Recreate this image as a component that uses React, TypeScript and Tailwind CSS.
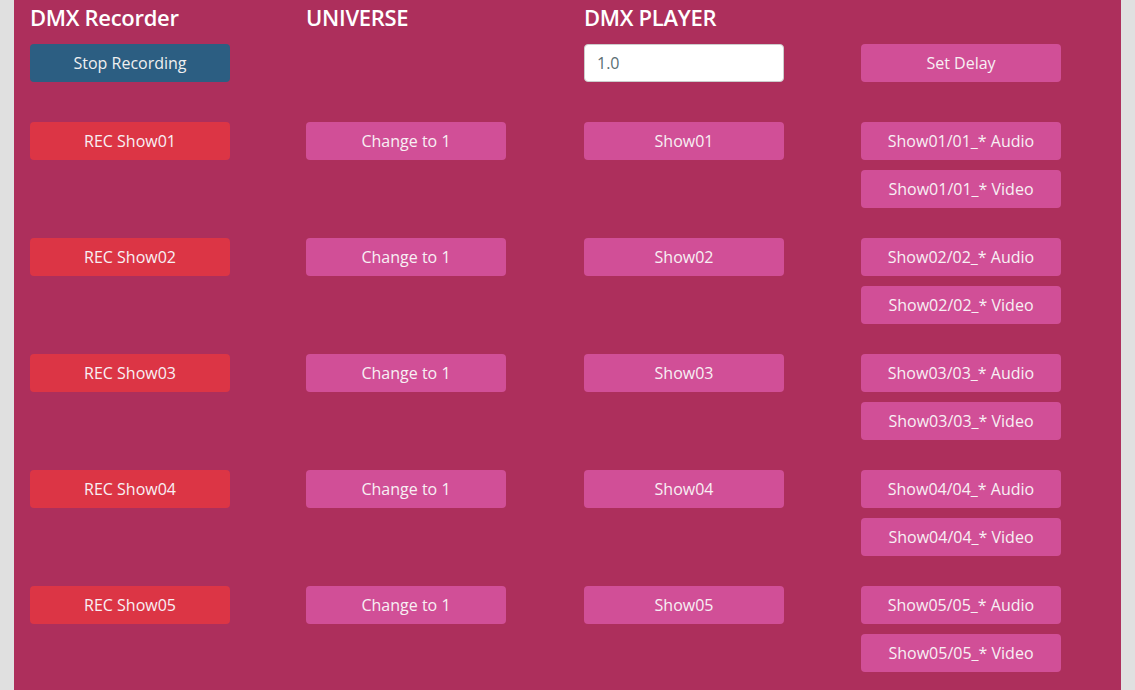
const shows = ["01", "02", "03", "04", "05"];

function Btn({ label, color }: { label: string; color: string }) {
  return (
    <button
      className={`w-[200px] h-[38px] rounded-[4px] text-[16px] text-[#f8f0f4] flex items-center justify-center ${color}`}
    >
      {label}
    </button>
  );
}

const pink = "bg-[#d14f97]";
const red = "bg-[#dc3545]";
const cols = "grid grid-cols-[276px_278px_277px_1fr]";
const heading =
  "h-[32px] leading-[32px] text-[22px] font-semibold tracking-[-0.3px] text-white";

export default function App() {
  return (
    <div
      className="min-h-screen bg-[#e0e0e0] px-[14px]"
      style={{ fontFamily: '"Open Sans", "Noto Sans", sans-serif' }}
    >
      <div className="min-h-[690px] bg-[#ad2f5c] pt-[1px] pb-[20px] pl-[16px]">
        {/* header */}
        <div className={cols}>
          <div>
            <h1 className={`${heading} mb-[11px]`}>DMX Recorder</h1>
            <button className="w-[200px] h-[38px] rounded-[4px] bg-[#2c5e82] text-[16px] text-[#f0f0f0]">
              Stop Recording
            </button>
          </div>
          <div>
            <h1 className={heading}>UNIVERSE</h1>
          </div>
          <div>
            <h1 className={`${heading} mb-[11px]`}>DMX PLAYER</h1>
            <input
              defaultValue="1.0"
              className="w-[200px] h-[38px] rounded-[4px] bg-white border border-[#ccc] px-[12px] text-[16px] text-[#5a6e73] outline-none"
            />
          </div>
          <div className="pt-[43px]">
            <Btn label="Set Delay" color={pink} />
          </div>
        </div>

        {/* rows */}
        <div className="mt-[40px] flex flex-col gap-[30px]">
          {shows.map((n) => (
            <div key={n} className={cols}>
              <div>
                <Btn label={`REC Show${n}`} color={red} />
              </div>
              <div>
                <Btn label="Change to 1" color={pink} />
              </div>
              <div>
                <Btn label={`Show${n}`} color={pink} />
              </div>
              <div className="flex flex-col gap-[10px]">
                <Btn label={`Show${n}/${n}_* Audio`} color={pink} />
                <Btn label={`Show${n}/${n}_* Video`} color={pink} />
              </div>
            </div>
          ))}
        </div>
      </div>
    </div>
  );
}
